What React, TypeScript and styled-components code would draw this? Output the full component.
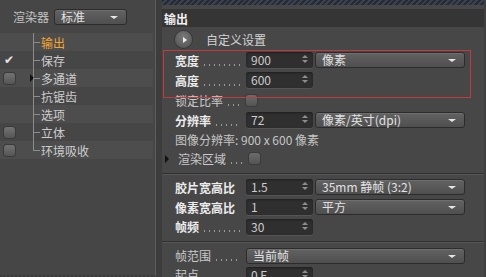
import styled, { createGlobalStyle } from "styled-components";

const GlobalStyle = createGlobalStyle`
  html, body {
    margin: 0;
    padding: 0;
    background: #474747;
  }
  body {
    font-family: "Noto Sans CJK SC", "Noto Sans", "Liberation Sans", sans-serif;
    font-size: 12px;
    color: #cfcfcf;
  }
`;

const Window = styled.div`
  width: 486px;
  height: 277px;
  display: flex;
  overflow: hidden;
  background: #474747;
`;

/* ---------- left tree panel ---------- */

const LeftPanel = styled.div`
  width: 156px;
  flex: none;
  display: flex;
  flex-direction: column;
  background: #464646;
  border-right: 1px solid #5d5d5d;
  border-bottom: 2px dotted #3a3a3a;
  box-sizing: border-box;
`;

const Gutter = styled.div`
  width: 6px;
  flex: none;
  background: #3d3d3d;
`;

const RendererBar = styled.div`
  height: 33px;
  flex: none;
  display: flex;
  align-items: center;
  padding-left: 13px;
  gap: 5px;
  color: #c4c4c4;
`;

const Tree = styled.div`
  display: flex;
  flex-direction: column;
  width: 153px;
`;

const TreeRow = styled.div<{ $light?: boolean }>`
  height: 18px;
  flex: none;
  display: flex;
  align-items: center;
  background: ${(p) => (p.$light ? "#4d4d4d" : "transparent")};
`;

const CheckCell = styled.div`
  width: 33px;
  flex: none;
  display: flex;
  align-items: center;
  padding-left: 4px;
  box-sizing: border-box;
`;

const Box = styled.div`
  width: 11px;
  height: 11px;
  border-radius: 3px;
  background: linear-gradient(#737373, #555);
  box-shadow: 0 0 0 1px #3a3a3a;
`;

const Tick = styled.span`
  color: #e4e4e4;
  font-family: "DejaVu Sans", sans-serif;
  font-size: 12px;
  line-height: 12px;
`;

const Connector = styled.div<{ $last?: boolean; $arrow?: boolean }>`
  position: relative;
  width: 8px;
  height: 18px;
  flex: none;
  &::before {
    content: "";
    position: absolute;
    left: 0;
    top: 0;
    width: 1px;
    height: ${(p) => (p.$last ? "9px" : "18px")};
    background: #8c8c8c;
  }
  &::after {
    content: "";
    position: absolute;
    left: 0;
    top: 9px;
    width: 7px;
    height: 1px;
    background: #8c8c8c;
  }
  ${(p) =>
    p.$arrow &&
    `
  & > i {
    position: absolute;
    left: -3px;
    top: 5px;
    width: 0;
    height: 0;
    border-top: 4px solid transparent;
    border-bottom: 4px solid transparent;
    border-left: 4px solid #111;
  }`}
`;

const TreeText = styled.span<{ $active?: boolean }>`
  color: ${(p) => (p.$active ? "#f3a531" : "#cdcdcd")};
  white-space: nowrap;
`;

/* ---------- shared controls ---------- */

const Select = styled.div<{ $w: number }>`
  position: relative;
  width: ${(p) => p.$w}px;
  height: 16px;
  flex: none;
  box-sizing: border-box;
  border: 1px solid #2c2c2c;
  border-radius: 3px;
  background: linear-gradient(#626262, #4f4f4f);
  box-shadow: inset 0 1px 0 #6e6e6e;
  color: #e2e2e2;
  display: flex;
  align-items: center;
  padding-left: 6px;
  line-height: 14px;
  white-space: nowrap;
  &::after {
    content: "";
    position: absolute;
    right: 8px;
    top: 6px;
    border-left: 4px solid transparent;
    border-right: 4px solid transparent;
    border-top: 3px solid #e6e6e6;
  }
`;

const NumberField = styled.div`
  position: relative;
  width: 67px;
  height: 16px;
  flex: none;
  box-sizing: border-box;
  border-radius: 3px;
  background: #2f2f2f;
  box-shadow: inset 0 1px 2px #1f1f1f, 0 1px 0 #555;
  display: flex;
  align-items: center;
  padding-left: 5px;
  color: #cdcdcd;
  line-height: 14px;
`;

const Spinner = styled.div`
  position: absolute;
  right: 5px;
  top: 3px;
  display: flex;
  flex-direction: column;
  gap: 2px;
  & > i {
    width: 0;
    height: 0;
    border-left: 3px solid transparent;
    border-right: 3px solid transparent;
  }
  & > i:first-child {
    border-bottom: 3px solid #8e8e8e;
  }
  & > i:last-child {
    border-top: 3px solid #8e8e8e;
  }
`;

const SmallCheck = styled.div`
  width: 11px;
  height: 11px;
  flex: none;
  border-radius: 3px;
  background: linear-gradient(#6c6c6c, #545454);
  box-shadow: 0 0 0 1px #3b3b3b;
`;

/* ---------- right settings panel ---------- */

const RightPanel = styled.div`
  position: relative;
  flex: 1;
  display: flex;
  flex-direction: column;
  overflow: hidden;
  border-right: 2px solid #3f3f3f;
`;

const Stripe = styled.div`
  height: 5px;
  flex: none;
  background: repeating-linear-gradient(
    135deg,
    #252a33 0 2px,
    #3a4150 2px 4px
  );
`;

const SectionHeader = styled.div`
  margin-top: 4px;
  height: 18px;
  flex: none;
  background: #353535;
  display: flex;
  align-items: center;
  padding-left: 2px;
  font-weight: bold;
  color: #f0f0f0;
`;

const PresetRow = styled.div`
  height: 21px;
  flex: none;
  margin-top: 2px;
  display: flex;
  align-items: center;
  padding-left: 13px;
  gap: 14px;
  color: #d2d2d2;
`;

const RoundButton = styled.div`
  width: 17px;
  height: 17px;
  border-radius: 50%;
  background: radial-gradient(circle at 50% 35%, #7a7a7a, #4e4e4e);
  box-shadow: 0 0 0 1px #383838;
  display: flex;
  align-items: center;
  justify-content: center;
  & > i {
    margin-left: 2px;
    border-top: 3px solid transparent;
    border-bottom: 3px solid transparent;
    border-left: 4px solid #eee;
  }
`;

const FormRow = styled.div<{ $h?: number; $indent?: number }>`
  height: ${(p) => p.$h ?? 20}px;
  flex: none;
  display: flex;
  align-items: center;
  padding-left: ${(p) => p.$indent ?? 13}px;
  gap: 2px;
`;

const Label = styled.div<{ $bold?: boolean; $w?: number }>`
  width: ${(p) => p.$w ?? 69}px;
  flex: none;
  display: flex;
  align-items: baseline;
  font-weight: ${(p) => (p.$bold ? "bold" : "normal")};
  color: ${(p) => (p.$bold ? "#ececec" : "#c9c9c9")};
  white-space: nowrap;
  overflow: hidden;
`;

const Leader = styled.span`
  flex: 1;
  height: 2px;
  margin: 0 4px 0 3px;
  background-image: radial-gradient(circle, #9a9a9a 0.7px, transparent 0.9px);
  background-size: 5px 2px;
  background-repeat: repeat-x;
`;

const InfoText = styled.span`
  color: #c6c6c6;
  white-space: nowrap;
`;

const Expander = styled.i`
  width: 0;
  height: 0;
  margin-right: 7px;
  border-top: 4px solid transparent;
  border-bottom: 4px solid transparent;
  border-left: 4px solid #111;
`;

const Divider = styled.div<{ $m?: string }>`
  height: 2px;
  flex: none;
  border-top: 1px solid #2f2f2f;
  background: #575757;
  box-sizing: border-box;
  margin: ${(p) => p.$m ?? "0"};
`;

const Annotation = styled.div`
  position: absolute;
  left: 1px;
  top: 50px;
  width: 308px;
  height: 48px;
  box-sizing: border-box;
  border: 1px solid #c23a3e;
  pointer-events: none;
`;

const Num = ({ value }: { value: string }) => (
  <NumberField>
    {value}
    <Spinner>
      <i />
      <i />
    </Spinner>
  </NumberField>
);

const Field = ({
  label,
  bold,
  dots = true,
}: {
  label: string;
  bold?: boolean;
  dots?: boolean;
}) => (
  <Label $bold={bold}>
    {label}
    {dots && <Leader />}
  </Label>
);

const treeItems = [
  { text: "输出", active: true, check: "none" },
  { text: "保存", check: "tick" },
  { text: "多通道", check: "box", arrow: true },
  { text: "抗锯齿", check: "none" },
  { text: "选项", check: "none" },
  { text: "立体", check: "box" },
  { text: "环境吸收", check: "box" },
];

export default function App() {
  return (
    <>
      <GlobalStyle />
      <Window>
        <LeftPanel>
          <RendererBar>
            渲染器
            <Select $w={73}>标准</Select>
          </RendererBar>
          <Tree>
            {treeItems.map((item, i) => (
              <TreeRow key={item.text} $light={i % 2 === 0}>
                <CheckCell>
                  {item.check === "box" && <Box />}
                  {item.check === "tick" && <Tick>✔</Tick>}
                </CheckCell>
                <Connector $last={i === treeItems.length - 1} $arrow={item.arrow}>
                  {item.arrow && <i />}
                </Connector>
                <TreeText $active={item.active}>{item.text}</TreeText>
              </TreeRow>
            ))}
          </Tree>
        </LeftPanel>
        <Gutter />
        <RightPanel>
          <Stripe />
          <SectionHeader>输出</SectionHeader>
          <PresetRow>
            <RoundButton>
              <i />
            </RoundButton>
            自定义设置
          </PresetRow>
          <FormRow>
            <Field label="宽度" bold />
            <Num value="900" />
            <Select $w={150}>像素</Select>
          </FormRow>
          <FormRow>
            <Field label="高度" bold />
            <Num value="600" />
          </FormRow>
          <FormRow>
            <Field label="锁定比率" />
            <SmallCheck />
          </FormRow>
          <FormRow>
            <Field label="分辨率" bold />
            <Num value="72" />
            <Select $w={150}>像素/英寸(dpi)</Select>
          </FormRow>
          <FormRow $h={19}>
            <InfoText>图像分辨率: 900 x 600 像素</InfoText>
          </FormRow>
          <FormRow $h={19} $indent={3}>
            <Expander />
            <Field label="渲染区域" />
            <SmallCheck />
          </FormRow>
          <Divider $m="5px 0 2px" />
          <FormRow>
            <Field label="胶片宽高比" bold dots={false} />
            <Num value="1.5" />
            <Select $w={150}>35mm 静帧 (3:2)</Select>
          </FormRow>
          <FormRow>
            <Field label="像素宽高比" bold dots={false} />
            <Num value="1" />
            <Select $w={150}>平方</Select>
          </FormRow>
          <FormRow $h={19}>
            <Field label="帧频" bold />
            <Num value="30" />
          </FormRow>
          <Divider $m="5px 0 3px" />
          <FormRow $h={19}>
            <Field label="帧范围" />
            <Select $w={219}>当前帧</Select>
          </FormRow>
          <FormRow $h={19}>
            <Field label="起点" />
            <Num value="0 F" />
          </FormRow>
          <Annotation />
        </RightPanel>
      </Window>
    </>
  );
}
